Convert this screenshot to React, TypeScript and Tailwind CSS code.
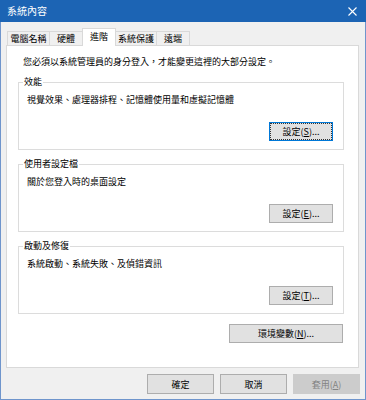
import React from "react";

function Btn({
  children,
  className = "",
  focused = false,
  disabled = false,
}: {
  children: React.ReactNode;
  className?: string;
  focused?: boolean;
  disabled?: boolean;
}) {
  if (focused) {
    return (
      <div className={`flex border border-[#0078d7] bg-[#e5f1fb] ${className}`}>
        <div className="flex flex-1 items-center justify-center border border-dotted border-[#333] bg-[#e1e1e1] leading-none">
          {children}
        </div>
      </div>
    );
  }
  return (
    <div
      className={`flex items-center justify-center border leading-none ${
        disabled ? "border-[#cccccc] bg-[#cccccc] text-[#838383]" : "border-[#adadad] bg-[#e1e1e1]"
      } ${className}`}
    >
      {children}
    </div>
  );
}

function Group({
  title,
  text,
  button,
  focused = false,
  className = "",
}: {
  title: string;
  text: string;
  button: React.ReactNode;
  focused?: boolean;
  className?: string;
}) {
  return (
    <fieldset className={`ml-[11px] mr-[14px] border border-[#dcdcdc] pl-[4px] pr-[10px] pb-[8px] ${className}`}>
      <legend className="px-[1px] leading-[12px]">{title}</legend>
      <div className="flex flex-col">
        <p className="mt-[6px] pl-[4px] leading-[12px]">{text}</p>
        <Btn focused={focused} className="mt-[16px] h-[19px] w-[64px] self-end">
          {button}
        </Btn>
      </div>
    </fieldset>
  );
}

const tabs = [
  { label: "電腦名稱", w: "w-[43px]" },
  { label: "硬體", w: "w-[34px]" },
  { label: "進階", w: "w-[34px]", active: true },
  { label: "系統保護", w: "w-[42px]" },
  { label: "遠端", w: "w-[34px]" },
];

export default function App() {
  return (
    <div className="flex h-[400px] w-[366px] flex-col border-x border-b border-[#6f95cc] bg-[#f0f0f0] font-['Noto_Sans_CJK_TC','Microsoft_JhengHei_UI',sans-serif] text-[9px] text-black">
      {/* title bar */}
      <div className="-mx-px flex h-[22px] shrink-0 items-center justify-between bg-[#1c64b4] pl-[7px] pr-[9px] text-white">
        <span className="text-[10px] leading-none">系統內容</span>
        <svg width="9" height="9" viewBox="0 0 9 9" className="mt-[1px]">
          <path d="M0.5 0.5 L8.5 8.5 M8.5 0.5 L0.5 8.5" stroke="#fff" strokeWidth="1.1" fill="none" />
        </svg>
      </div>

      {/* tabs */}
      <div className="mt-[6px] ml-[6px] flex items-end">
        {tabs.map((t, i) =>
          t.active ? (
            <div
              key={t.label}
              className={`relative z-10 -mb-px flex h-[18px] ${t.w} ${i > 0 ? "-ml-px" : ""} items-start justify-center border-x border-t border-[#d9d9d9] bg-white pt-[3px] leading-none`}
            >
              {t.label}
            </div>
          ) : (
            <div
              key={t.label}
              className={`flex h-[14px] ${t.w} ${i > 0 ? "-ml-px" : ""} items-center justify-center border-x border-t border-[#d9d9d9] bg-[#f0f0f0] leading-none`}
            >
              {t.label}
            </div>
          )
        )}
      </div>

      {/* panel */}
      <div className="ml-[5px] flex h-[323px] w-[353px] shrink-0 flex-col border border-[#d9d9d9] bg-white">
        <p className="pt-[10px] pl-[16px] leading-[12px]">您必須以系統管理員的身分登入，才能變更這裡的大部分設定。</p>

        <Group
          className="mt-[8px]"
          title="效能"
          text="視覺效果、處理器排程、記憶體使用量和虛擬記憶體"
          focused
          button={
            <>
              設定(<span className="underline">S</span>)...
            </>
          }
        />
        <Group
          className="mt-[8px]"
          title="使用者設定檔"
          text="關於您登入時的桌面設定"
          button={
            <>
              設定(<span className="underline">E</span>)...
            </>
          }
        />
        <Group
          className="mt-[8px]"
          title="啟動及修復"
          text="系統啟動、系統失敗、及偵錯資訊"
          button={
            <>
              設定(<span className="underline">T</span>)...
            </>
          }
        />

        <Btn className="mt-[10px] mr-[15px] h-[19px] w-[114px] self-end">
          環境變數(<span className="underline">N</span>)...
        </Btn>
      </div>

      {/* footer buttons */}
      <div className="mt-[6px] mr-[5px] flex justify-end gap-[6px]">
        <Btn className="h-[20px] w-[67px]">確定</Btn>
        <Btn className="h-[20px] w-[67px]">取消</Btn>
        <Btn disabled className="h-[20px] w-[67px]">
          套用(<span className="underline">A</span>)
        </Btn>
      </div>
    </div>
  );
}
